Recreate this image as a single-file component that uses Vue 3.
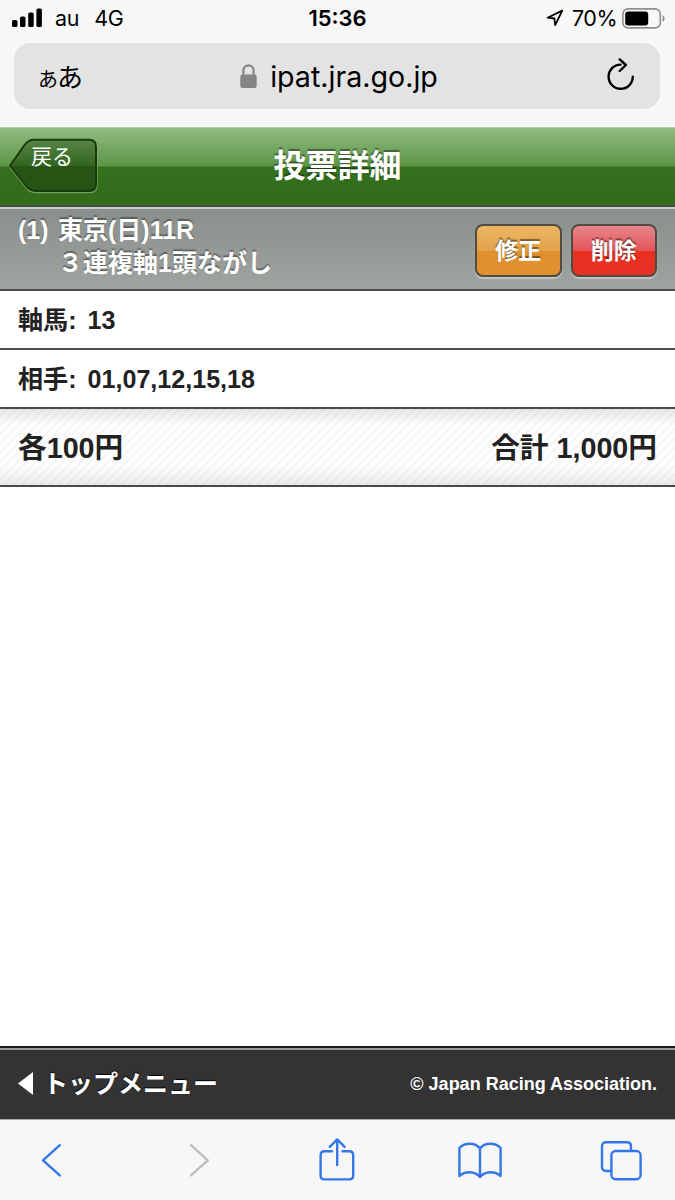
<script setup>
const rows = [
  { label: "軸馬:", value: "13" },
  { label: "相手:", value: "01,07,12,15,18" }
];
</script>

<template>
  <div class="screen">
    <div class="statusbar">
      <div class="carrier">
        <svg class="signal" width="30" height="20" viewBox="0 0 30 20">
          <rect x="0" y="12" width="5.5" height="7" rx="1.6" />
          <rect x="8" y="8.5" width="5.5" height="10.5" rx="1.6" />
          <rect x="16.2" y="4.5" width="5.5" height="14.5" rx="1.6" />
          <rect x="24.4" y="0.5" width="5.5" height="18.5" rx="1.6" />
        </svg>
        <span class="au">au</span>
        <span>4G</span>
      </div>
      <span class="clock">15:36</span>
      <div class="power">
        <svg class="location" width="18" height="18" viewBox="0 0 18 18">
          <path d="M16.2 1.6 L1.6 8.7 L8.4 9.5 L9.2 16.2 Z" />
        </svg>
        <span class="percent">70%</span>
        <svg class="battery" width="43" height="21" viewBox="0 0 43 21">
          <rect class="case" x="0.9" y="0.9" width="37.4" height="19" rx="5" />
          <rect x="3.2" y="3.4" width="23" height="14" rx="3" />
          <path class="tip" d="M40.6 7 Q42.6 8 42.6 10.4 Q42.6 12.8 40.6 13.8 Z" />
        </svg>
      </div>
    </div>

    <div class="address">
      <span class="reader"><small>あ</small>あ</span>
      <div class="url">
        <svg width="17" height="25" viewBox="0 0 17 25">
          <path class="shackle" d="M3.4 12 V6.4 A5.1 5.1 0 0 1 13.6 6.4 V12" />
          <rect x="0.3" y="10.4" width="16.4" height="13.6" rx="2.2" />
        </svg>
        <span>ipat.jra.go.jp</span>
      </div>
      <svg class="reload" width="30" height="34" viewBox="0 0 30 34">
        <path d="M14.6 6.6 A12.1 12.1 0 1 0 26.8 18.8" />
        <path d="M13.7 1.4 L19.9 7 L13.7 13" />
      </svg>
    </div>

    <header class="header">
      <a class="back" href="#">
        <svg width="91" height="57" viewBox="0 0 91 57">
          <defs>
            <linearGradient id="backFill" x1="0" y1="0" x2="0" y2="1">
              <stop offset="0" stop-color="#578544" />
              <stop offset="0.51" stop-color="#326520" />
              <stop offset="0.52" stop-color="#275315" />
              <stop offset="1" stop-color="#275315" />
            </linearGradient>
          </defs>
          <path class="glow" d="M2 29.5 L16.5 8 Q20.5 3 26 3 H82 Q89 3 89 10 V47.5 Q89 54.5 82 54.5 H28 Q22 54.5 18.5 50 Z" />
          <path class="shape" fill="url(#backFill)" d="M2 27.8 L16.5 7 Q20.5 1.8 26 1.8 H81 Q88 1.8 88 8.8 V46 Q88 53 81 53 H28 Q22 53 18.5 48.5 Z" />
        </svg>
        <span>戻る</span>
      </a>
      <h1>投票詳細</h1>
    </header>

    <section class="race">
      <span class="number">(1)</span>
      <div class="name">
        <div>東京(日)11R</div>
        <div>３連複軸1頭ながし</div>
      </div>
      <div class="buttons">
        <button class="edit">修正</button>
        <button class="delete">削除</button>
      </div>
    </section>

    <div v-for="row in rows" :key="row.label" class="row">
      <span class="label">{{ row.label }}</span>
      <span>{{ row.value }}</span>
    </div>

    <div class="total">
      <span>各100円</span>
      <span>合計 1,000円</span>
    </div>

    <main class="blank"></main>

    <footer class="footer">
      <a class="top" href="#">
        <svg width="15" height="23" viewBox="0 0 15 23">
          <path d="M15 0 V23 L0 11.5 Z" />
        </svg>
        <span>トップメニュー</span>
      </a>
      <span class="copyright">© Japan Racing Association.</span>
    </footer>

    <nav class="toolbar">
      <svg viewBox="0 0 44 44"><path d="M29.8 7.2 L13 22.3 L29.8 37.4" /></svg>
      <svg class="off" viewBox="0 0 44 44"><path d="M18 7.2 L34.8 22.3 L18 37.4" /></svg>
      <svg viewBox="0 0 44 44">
        <path d="M17 13.2 H9.5 Q5.6 13.2 5.6 17 V37.5 Q5.6 41.4 9.5 41.4 H34.3 Q38.2 41.4 38.2 37.5 V17 Q38.2 13.2 34.3 13.2 H27.5" />
        <path d="M22.2 27 V1.8 M14.8 8.8 L22.2 1.4 L29.6 8.8" />
      </svg>
      <svg viewBox="0 0 44 44">
        <path d="M22 10.5 V39 M22 10.5 C17 3.8 6 4.6 1.4 10 V38 C7 32.8 17 32.8 22 39 C27 32.8 37 32.8 42.6 38 V10 C38 4.6 27 3.8 22 10.5" />
      </svg>
      <svg viewBox="0 0 44 44">
        <path d="M11 33 H6.2 Q2 33 2 28.8 V8.4 Q2 4.2 6.2 4.2 H26.8 Q31 4.2 31 8.4 V12.8" />
        <rect x="11.4" y="13" width="29.2" height="28.2" rx="4.2" />
      </svg>
    </nav>
  </div>
</template>

<style>
body {
  margin: 0;
  background: #fff;
}
</style>

<style scoped>
.screen {
  display: flex;
  flex-direction: column;
  width: 675px;
  height: 1200px;
  box-sizing: border-box;
  overflow: hidden;
  background: #f7f7f7;
  color: #222;
  font-family: "Liberation Sans", "Noto Sans CJK JP", sans-serif;
  font-weight: bold;
  white-space: nowrap;
}
.screen * {
  box-sizing: border-box;
}
a {
  color: #fff;
  text-decoration: none;
}

.statusbar {
  display: grid;
  grid-template-columns: 1fr auto 1fr;
  align-items: center;
  height: 43px;
  padding: 0 10px 7px 12px;
  color: #000;
  font-family: Inter, sans-serif;
  font-size: 21.5px;
  font-weight: 400;
}
.carrier,
.power {
  display: flex;
  align-items: center;
}
.signal {
  margin-right: 13px;
}
.au {
  margin-right: 15px;
}
.carrier span {
  letter-spacing: -0.3px;
}
.clock {
  margin-right: 2px;
  font-size: 22px;
  font-weight: 600;
}
.power {
  justify-content: flex-end;
}
.location {
  margin-right: 8px;
}
.location path {
  fill: none;
  stroke: #000;
  stroke-width: 1.8;
  stroke-linejoin: round;
}
.percent {
  margin-right: 5px;
  letter-spacing: -0.5px;
}
.battery .case {
  fill: none;
  stroke: #8f8f8f;
  stroke-width: 1.6;
}
.battery .tip {
  fill: #8f8f8f;
}

.address {
  display: flex;
  align-items: center;
  justify-content: space-between;
  height: 66px;
  margin: 0 15px 18px 14px;
  padding: 0 24px;
  border-radius: 16px;
  background: #e3e3e4;
  color: #000;
  font-family: Inter, "Noto Sans CJK JP", sans-serif;
  font-weight: 400;
}
.reader {
  width: 80px;
  padding-bottom: 2px;
  font-size: 26px;
  letter-spacing: -1px;
}
.reader small {
  font-size: 20px;
}
.url {
  display: flex;
  align-items: center;
  gap: 13px;
  margin-left: 4px;
  font-size: 28.6px;
}
.url svg {
  fill: #858587;
}
.url .shackle {
  fill: none;
  stroke: #858587;
  stroke-width: 2.2;
}
.reload {
  margin: 0 0 2px 50px;
}
.reload path {
  fill: none;
  stroke: #000;
  stroke-width: 2.4;
  stroke-linecap: round;
  stroke-linejoin: round;
}

.header {
  display: grid;
  grid-template-columns: 1fr auto 1fr;
  height: 80px;
  border-top: 1px solid #b3cda8;
  border-bottom: 2px solid #454a45;
  background: linear-gradient(#92bb82 0, #5c9546 38px, #34701d 39px, #326b1b 100%);
}
.back {
  display: grid;
  justify-self: start;
  margin: 10px 0 0 8px;
  font-size: 21px;
  font-weight: 400;
}
.back svg,
.back span {
  grid-area: 1 / 1;
}
.back .glow {
  fill: none;
  stroke: #8db47e;
  stroke-opacity: 0.7;
  stroke-width: 1.5;
}
.back .shape {
  stroke: #173c09;
  stroke-width: 2;
}
.back span {
  z-index: 1;
  padding-left: 23px;
  line-height: 37px;
}
h1 {
  margin: 0;
  color: #fff;
  font-size: 32px;
  line-height: 76px;
  text-shadow: 0 -2px 1px rgba(0, 0, 0, 0.4);
}

.race {
  display: flex;
  height: 84px;
  padding: 0 18px;
  border-top: 2px solid #c6cac8;
  border-bottom: 2px solid #4a4a4a;
  background: linear-gradient(#8a8f8c, #9fa4a1);
  color: #fff;
  font-size: 25px;
  line-height: 33px;
  text-shadow: 0 -2px 1px rgba(0, 0, 0, 0.35);
}
.number {
  width: 40px;
  padding-top: 5px;
}
.name {
  flex: 1;
  padding-top: 5px;
}
.buttons {
  display: flex;
  gap: 9px;
  padding-top: 15px;
}
button {
  width: 86.5px;
  height: 53px;
  padding: 0 0 4px;
  border: 2px solid #514b42;
  border-radius: 8px;
  box-shadow: 0 2px 1px #c2c6c4;
  color: #fff;
  font: bold 23px "Liberation Sans", "Noto Sans CJK JP", sans-serif;
  text-shadow: 0 -2px 1px rgba(0, 0, 0, 0.45);
}
.edit {
  background: linear-gradient(#ecb765 0, #e3a149 50%, #df902f 51%, #df902f 100%);
}
.delete {
  background: linear-gradient(#e68689 0, #e4555a 50%, #e83023 51%, #e83023 100%);
}

.row {
  display: flex;
  gap: 11px;
  height: 59px;
  padding-left: 18px;
  border-bottom: 2px solid #4c4c50;
  background: #fff;
  font-size: 25.1px;
  line-height: 59px;
}

.total {
  display: flex;
  justify-content: space-between;
  height: 78px;
  padding: 0 18px;
  border-bottom: 2px solid #48484a;
  background:
    linear-gradient(rgba(0, 0, 0, 0.09), transparent 16px, transparent 58px, rgba(0, 0, 0, 0.08)),
    repeating-linear-gradient(135deg, #fdfdfd 0, #fdfdfd 4px, #f1f1f1 5px, #fdfdfd 6.4px);
  font-size: 28.7px;
  line-height: 78px;
}

.blank {
  flex: 1;
  background: #fff;
}

.footer {
  display: flex;
  align-items: center;
  justify-content: space-between;
  height: 72px;
  padding: 0 18px;
  border-top: 2px solid #999c9a;
  border-bottom: 1px solid #a8a8a8;
  outline: 2px solid #191919;
  background: #333;
  color: #fff;
}
.top {
  display: flex;
  align-items: center;
  gap: 10px;
  font-size: 25px;
  text-shadow: 0 -1px 1px #000;
}
.top span {
  padding-bottom: 5px;
}
.top svg {
  margin-bottom: 2px;
  fill: #fff;
}
.copyright {
  padding-bottom: 1px;
  font-size: 18px;
}

.toolbar {
  display: flex;
  justify-content: space-between;
  height: 80px;
  padding: 18px 31px 0 30px;
  background: #f7f7f7;
}
.toolbar svg {
  width: 44px;
  height: 44px;
  fill: none;
  stroke: #3577e8;
  stroke-width: 2.4;
  stroke-linecap: round;
  stroke-linejoin: round;
}
.toolbar .off {
  stroke: #bfbfbf;
}
</style>
